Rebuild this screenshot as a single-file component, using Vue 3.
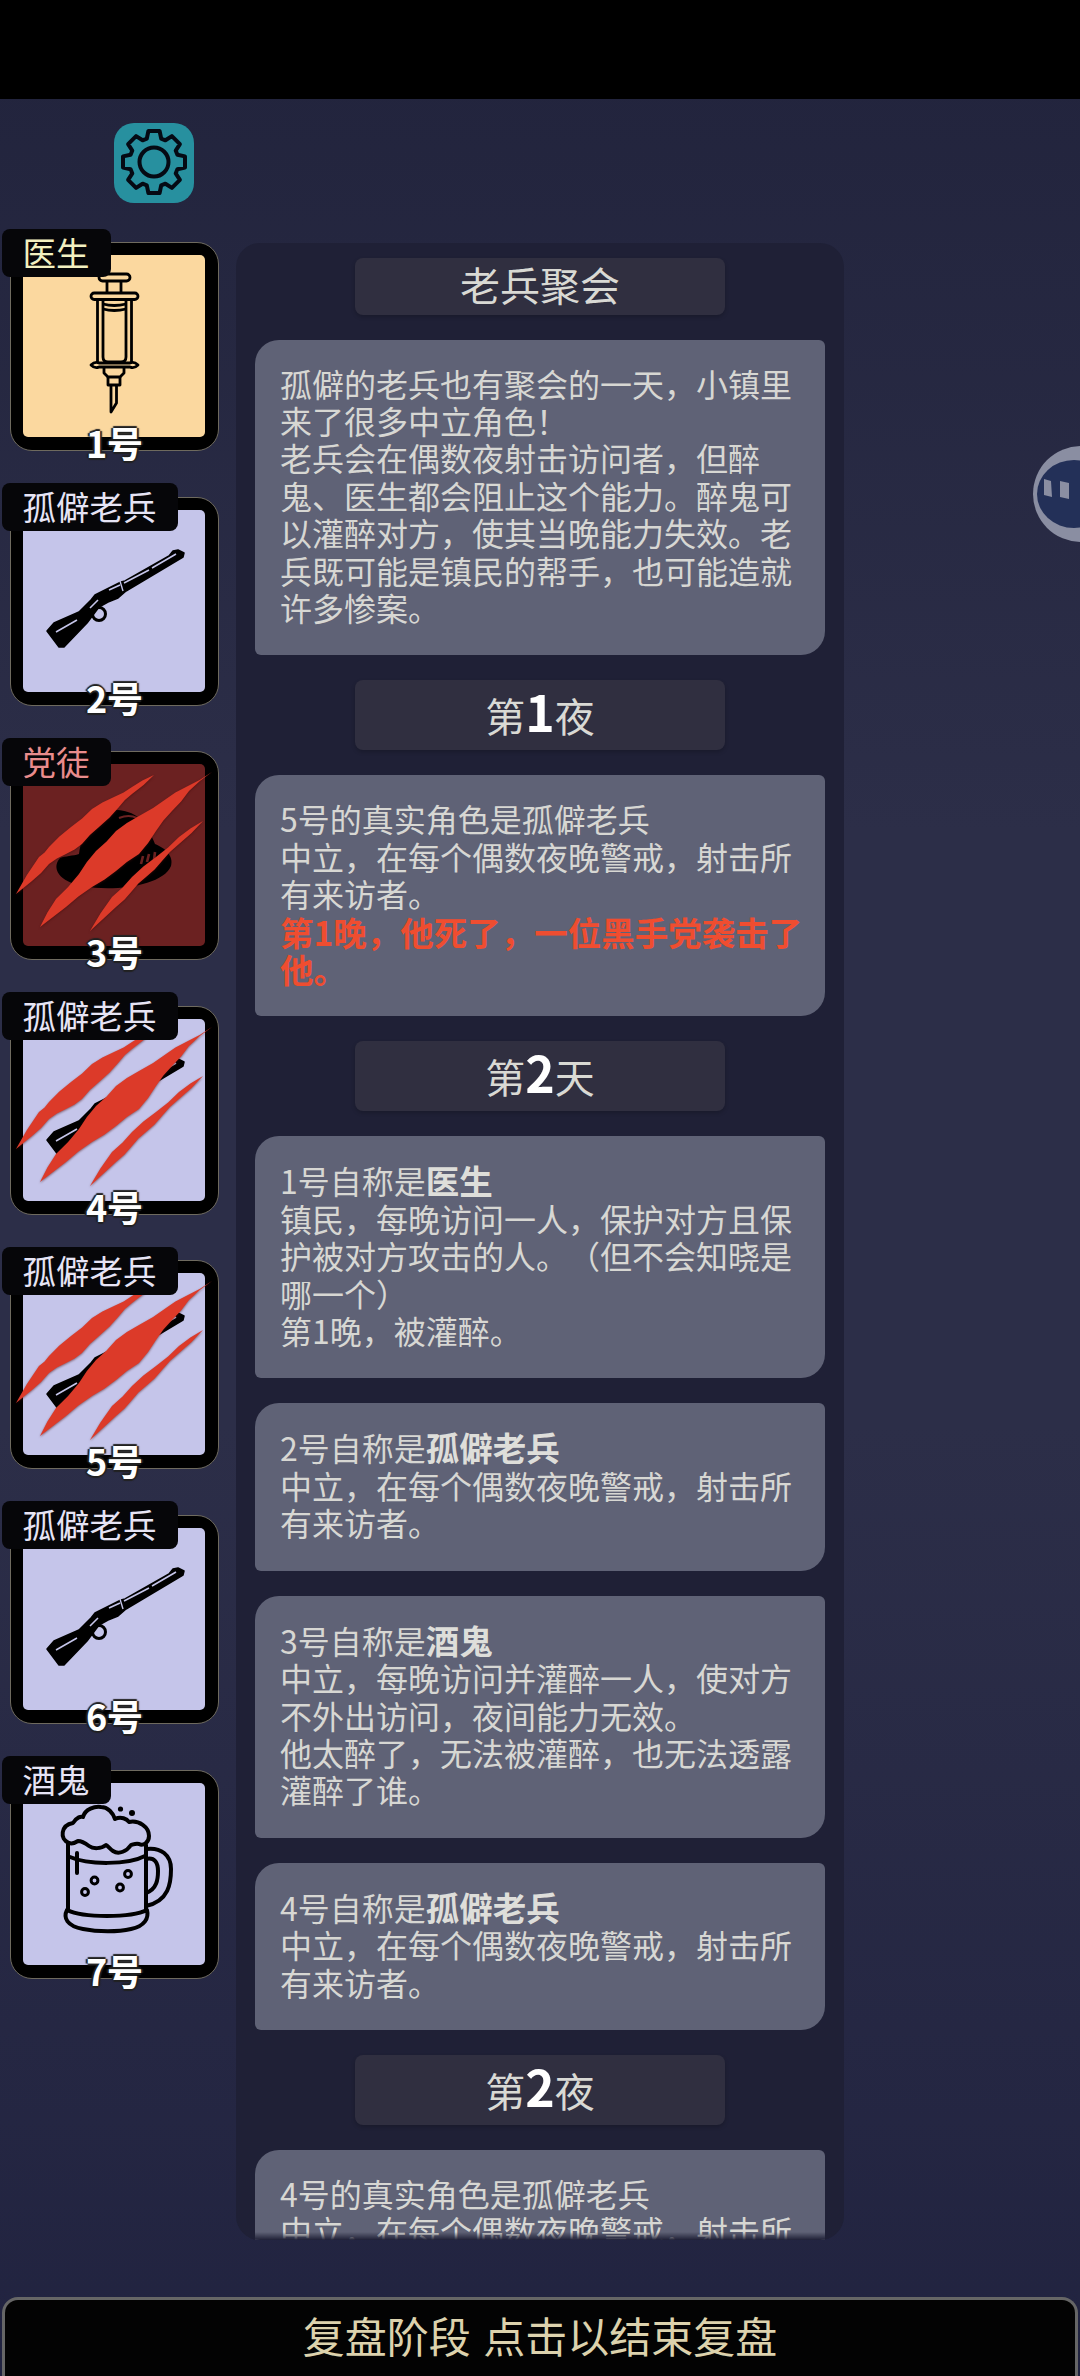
<script setup>
const seats = [
  { no: 1, name: '医生', tone: 'doc', icon: 'syringe' },
  { no: 2, name: '孤僻老兵', tone: 'plain', icon: 'rifle' },
  { no: 3, name: '党徒', tone: 'evil', icon: 'hat', dead: true },
  { no: 4, name: '孤僻老兵', tone: 'plain', icon: 'rifle', dead: true },
  { no: 5, name: '孤僻老兵', tone: 'plain', icon: 'rifle', dead: true },
  { no: 6, name: '孤僻老兵', tone: 'plain', icon: 'rifle' },
  { no: 7, name: '酒鬼', tone: 'plain', icon: 'beer' },
]

const vetDesc = '中立，在每个偶数夜晚警戒，射击所有来访者。'

// 复盘记录，title 和 msg 交替
const log = [
  { title: ['老兵聚会'] },
  { lines: [
    { text: '孤僻的老兵也有聚会的一天，小镇里来了很多中立角色！' },
    { text: '老兵会在偶数夜射击访问者，但醉鬼、医生都会阻止这个能力。醉鬼可以灌醉对方，使其当晚能力失效。老兵既可能是镇民的帮手，也可能造就许多惨案。' },
  ] },
  { title: ['第', '1', '夜'] },
  { lines: [
    { text: '5号的真实角色是孤僻老兵' },
    { text: vetDesc },
    { text: '第1晚，他死了，一位黑手党袭击了他。', red: true },
  ] },
  { title: ['第', '2', '天'] },
  { lines: [
    { text: '1号自称是', bold: '医生' },
    { text: '镇民，每晚访问一人，保护对方且保护被对方攻击的人。（但不会知晓是哪一个）' },
    { text: '第1晚，被灌醉。' },
  ] },
  { lines: [{ text: '2号自称是', bold: '孤僻老兵' }, { text: vetDesc }] },
  { lines: [
    { text: '3号自称是', bold: '酒鬼' },
    { text: '中立，每晚访问并灌醉一人，使对方不外出访问，夜间能力无效。' },
    { text: '他太醉了，无法被灌醉，也无法透露灌醉了谁。' },
  ] },
  { lines: [{ text: '4号自称是', bold: '孤僻老兵' }, { text: vetDesc }] },
  { title: ['第', '2', '夜'] },
  { lines: [{ text: '4号的真实角色是孤僻老兵' }, { text: vetDesc }] },
]

// 8 齿齿轮轮廓
function gearPath(cx, cy, outer, root) {
  const pts = []
  for (let i = 0; i < 8; i++) {
    const a = (i * Math.PI) / 4 - Math.PI / 2
    const at = (r, d) => [cx + r * Math.cos(a + d), cy + r * Math.sin(a + d)]
    pts.push(at(root, -0.3), at(outer, -0.18), at(outer, 0.18), at(root, 0.3))
  }
  return 'M' + pts.map((p) => p[0].toFixed(1) + ' ' + p[1].toFixed(1)).join('L') + 'Z'
}
const gear = gearPath(40, 39, 31.5, 24.5)

// 爪痕：两条边取中点加一点抖动，边缘才有毛刺感
function clawPath(points) {
  const out = []
  points.forEach((p, i) => {
    out.push(p)
    const n = points[i + 1]
    if (!n) return
    const jag = i % 2 ? 0.6 : -0.6
    out.push([(p[0] + n[0]) / 2 + jag, (p[1] + n[1]) / 2 + jag])
  })
  return 'M' + out.map((p) => p[0].toFixed(1) + ' ' + p[1].toFixed(1)).join('L') + 'Z'
}
const claws = [
  [[-7, 130], [16, 93], [26, 83], [48, 63], [69, 45], [91, 33], [109, 23], [131, 11], [109, 30], [96, 43], [76, 63], [59, 80], [43, 90], [26, 100], [9, 117]],
  [[17, 163], [33, 135], [56, 110], [73, 87], [93, 67], [116, 52], [143, 35], [163, 23], [189, 8], [166, 27], [149, 47], [133, 67], [116, 90], [93, 107], [69, 123], [43, 143]],
  [[67, 167], [89, 133], [109, 113], [133, 93], [156, 73], [180, 57], [156, 80], [139, 97], [123, 113], [109, 127], [93, 143]],
].map(clawPath)
</script>

<template>
  <div class="page">
    <div class="status"></div>

    <div class="main">
      <aside class="side">
        <button class="gear">
          <svg viewBox="0 0 80 80" width="80" height="80">
            <path :d="gear" fill="none" stroke="#050a14" stroke-width="4" stroke-linejoin="round" />
            <circle cx="40" cy="39" r="14.5" fill="none" stroke="#050a14" stroke-width="4" />
          </svg>
        </button>

        <div class="seats">
          <div v-for="s in seats" :key="s.no" class="seat">
            <div class="art" :class="s.tone">
              <svg viewBox="0 0 182 182" width="182" height="182" class="pic">
                <g v-if="s.icon === 'syringe'" fill="none" stroke="#000" stroke-width="2.8" stroke-linejoin="round">
                  <rect x="76" y="19" width="31" height="7" rx="3.5" />
                  <path d="M84 26V38M98 26V38" />
                  <rect x="68" y="38" width="47" height="6.5" rx="3.2" />
                  <path d="M74.5 44.5V107M108.5 44.5V107" />
                  <path d="M80 44.5V102Q80 107 85 107H98Q103 107 103 102V44.5" />
                  <path d="M80 49Q91 52 103 49M80 54Q91 57 103 54" />
                  <path d="M68 110Q72 106 76 108H107Q111 106 115 110Q111 114 107 112H76Q72 114 68 110Z" />
                  <path d="M81 113V118L85 122H97L101 118V113" />
                  <path d="M85 122V130H97V122" />
                  <path d="M88 130V157L93.5 148V130" />
                </g>

                <g v-else-if="s.icon === 'rifle'">
                  <path d="M24 121L31 113L56 102L68 90L72 85L98 72L102 71L146 46L150 41L155 40L161 43L160 47L103 81L95 88L85 92L76 97L64 113L41 137L36 137Z" fill="#000" stroke="#000" stroke-width="1.5" stroke-linejoin="round" />
                  <circle cx="76" cy="104" r="6.5" fill="none" stroke="#000" stroke-width="3" />
                  <path d="M33 122L54 110M101 73L126 60M129 58L153 44M86 80L97 75M67 98L75 90" fill="none" stroke="#c5c5ea" stroke-width="1.6" />
                  <path d="M97 71L100 81" stroke="#c5c5ea" stroke-width="1.4" />
                </g>

                <g v-else-if="s.icon === 'hat'">
                  <path d="M37 94C28 104 36 118 60 122C90 128 140 122 148 102C151 92 142 84 132 80C124 60 116 48 95 46C74 45 60 62 56 90C50 92 42 92 37 94Z" fill="#000" />
                  <path d="M96 54Q106 50 114 54" fill="none" stroke="#6b2121" stroke-width="2" />
                  <path d="M120 92L118 100M126 90L124 98M132 88L131 96" stroke="#6b2121" stroke-width="2.6" />
                </g>

                <g v-else-if="s.icon === 'beer'" fill="none" stroke="#000" stroke-width="4" stroke-linecap="round" stroke-linejoin="round">
                  <path d="M46 60C36 56 38 42 50 40C54 34 58 33 60 34C62 26 72 23 78 24C85 24 90 30 92 36C98 33 104 36 106 39C116 37 126 44 126 53C126 60 120 63 116 61C112 60 110 62 108 62C104 68 96 72 90 68C87 66 85 63 83 62C78 66 70 66 66 63C62 60 58 58 55 58C52 60 49 61 46 60Z" />
                  <path d="M45 60V127M123 62V127" />
                  <path d="M44 127C40 135 44 143 60 146C75 149 95 149 108 146C122 143 126 135 124 127C108 135 60 135 44 127Z" />
                  <path d="M47 74C65 82 105 82 122 73" />
                  <path d="M54 70V90" />
                  <path d="M123 66C138 64 148 72 148 86C148 100 146 118 123 123M123 76C132 74 135 80 135 88C135 96 134 106 123 110" />
                  <circle cx="71.5" cy="97.5" r="3.4" stroke-width="3" />
                  <circle cx="105" cy="91" r="3.4" stroke-width="3" />
                  <circle cx="62" cy="109" r="3.4" stroke-width="3" />
                  <circle cx="97" cy="104.5" r="3.4" stroke-width="3" />
                  <circle cx="97.5" cy="26" r="2.6" fill="#000" stroke="none" />
                  <circle cx="109" cy="30" r="3" fill="#000" stroke="none" />
                </g>

                <g v-if="s.dead" class="claws">
                  <path v-for="(d, k) in claws" :key="k" :d="d" />
                </g>
              </svg>
            </div>
            <span class="name" :class="s.tone">{{ s.name }}</span>
            <span class="no">{{ s.no }}号</span>
          </div>
        </div>
      </aside>

      <section class="panel">
        <template v-for="(item, i) in log" :key="i">
          <h3 v-if="item.title" class="title" :class="{ big: item.title[1] }">
            {{ item.title[0] }}<span v-if="item.title[1]" class="num">{{ item.title[1] }}</span>{{ item.title[2] }}
          </h3>
          <div v-else class="msg">
            <p v-for="(l, j) in item.lines" :key="j" :class="{ red: l.red }">
              {{ l.text }}<b v-if="l.bold">{{ l.bold }}</b>
            </p>
          </div>
        </template>
        <div class="fade"></div>
      </section>
    </div>

    <div class="end-bar">复盘阶段 点击以结束复盘</div>

    <svg class="float-ball" viewBox="0 0 47 96" width="47" height="96">
      <circle cx="48" cy="48" r="48" fill="#8a8ea2" />
      <ellipse cx="41" cy="48" rx="37" ry="34" fill="#233058" />
      <path d="M11 33L18 35L19 51L11 49Z" fill="#8a8ea2" />
      <path d="M27 35L36 37L36 53L27 51Z" fill="#8a8ea2" />
    </svg>
  </div>
</template>

<style>
html, body {
  margin: 0;
  background: #000;
}
</style>

<style scoped>
.page {
  position: relative;
  width: 1080px;
  height: 2376px;
  display: flex;
  flex-direction: column;
  overflow: hidden;
  background: linear-gradient(180deg, #21233c 0%, #2c2e48 35%, #2c2e48 60%, #212340 100%);
  font-family: "Noto Sans CJK SC", "Noto Sans", sans-serif;
  text-spacing-trim: space-all;
}

.status {
  height: 99px;
  flex: none;
  background: #000;
}

.main {
  height: 2198px;
  flex: none;
  display: flex;
}

.side {
  width: 236px;
  flex: none;
  padding-top: 24px;
  box-sizing: border-box;
}

.gear {
  display: block;
  width: 80px;
  height: 80px;
  margin-left: 114px;
  padding: 0;
  border: none;
  border-radius: 20px;
  background: #27909f;
}

.seats {
  margin-top: 39px;
  margin-left: 10px;
  display: flex;
  flex-direction: column;
  gap: 45.6px;
}

.seat {
  position: relative;
  width: 209px;
  height: 209px;
  box-sizing: border-box;
  padding: 12px;
  border: 1.5px solid #6e6a5e;
  border-radius: 22px;
  background: #000;
}

.art {
  width: 182px;
  height: 182px;
  border-radius: 5px;
}
.art.doc { background: #fbd89f; }
.art.plain { background: #c5c5ea; }
.art.evil { background: #6b2121; }

.pic {
  display: block;
  overflow: visible;
}

.claws {
  fill: #dc3a29;
  filter: drop-shadow(0 1px 1px rgba(70, 10, 10, 0.55));
}

.name {
  position: absolute;
  left: -9.5px;
  top: -14.5px;
  height: 48px;
  padding: 0 21px;
  border-radius: 8px;
  background: #060609;
  font-size: 33.5px;
  line-height: 45px;
  white-space: nowrap;
  color: #e6e4f5;
}
.name.doc { color: #f2f0c0; }
.name.evil { color: #e98c8c; }

.no {
  position: absolute;
  left: 0;
  right: 0;
  top: 179px;
  text-align: center;
  font-size: 36px;
  font-weight: 700;
  line-height: 40px;
  color: #fff;
  text-shadow: -2px 0 1px #222, 2px 0 1px #222, 0 -2px 1px #222, 0 2px 1px #222;
}

.panel {
  position: relative;
  width: 608px;
  height: 1997px;
  margin-top: 144px;
  padding: 15px 19px 0;
  box-sizing: border-box;
  display: flex;
  flex-direction: column;
  align-items: stretch;
  gap: 25px;
  overflow: hidden;
  border-radius: 24px;
  background: #1f2036;
}

.title {
  flex: none;
  width: 370px;
  margin: 0 auto;
  padding-bottom: 3.4px;
  border-radius: 8px;
  background: #302f40;
  box-shadow: 0 2px 4px rgba(0, 0, 0, 0.2);
  text-align: center;
  font-size: 40px;
  font-weight: 400;
  line-height: 1.33;
  color: #d9d9d4;
}

.title.big {
  padding-bottom: 10px;
  line-height: 1.2;
}

.num {
  font-size: 50px;
  font-weight: 700;
  color: #fff;
}

.msg {
  flex: none;
  padding: 25px 20px 29px 25px;
  border-radius: 24px 6px 24px 6px;
  background: #5f6276;
  font-size: 32px;
  line-height: 37.4px;
  color: #d7d7d3;
}

.msg p {
  margin: 0;
}

.msg b {
  font-size: 33.5px;
  font-weight: 700;
  color: #dededa;
}

.msg .red {
  font-size: 33.5px;
  font-weight: 700;
  color: #ef4d30;
}

.fade {
  position: absolute;
  left: 0;
  right: 0;
  bottom: 0;
  height: 8px;
  background: linear-gradient(180deg, rgba(31, 32, 54, 0), #1f2036);
}

.end-bar {
  flex: none;
  height: 79px;
  margin: 0 2px;
  box-sizing: border-box;
  border: 3px solid #666;
  border-bottom: none;
  border-radius: 16px 16px 0 0;
  background: #030303;
  text-align: center;
  font-size: 42px;
  word-spacing: 3px;
  line-height: 70px;
  color: #dcd2ad;
}

.float-ball {
  position: absolute;
  right: 0;
  top: 446px;
}
</style>
